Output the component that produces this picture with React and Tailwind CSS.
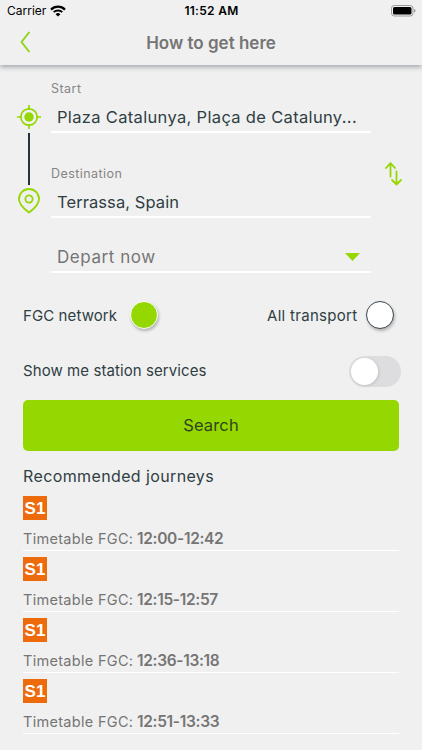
const journeys = ["12:00-12:42", "12:15-12:57", "12:36-13:18", "12:51-13:33"];

const StatusBar = () => (
  <div className="h-[22px] pl-[7px] pr-[6px] grid grid-cols-3 items-center text-black">
    <div className="flex items-center gap-[4px]">
      <span className="text-[12px] leading-4">Carrier</span>
      <svg width="16" height="12" viewBox="0 0 16 12" fill="none">
        <path d="M1 4.6a9.9 9.9 0 0 1 14 0" stroke="#000" strokeWidth="2.2" />
        <path d="M3.7 7.2a6.1 6.1 0 0 1 8.6 0" stroke="#000" strokeWidth="1.9" />
        <path d="M8 11.6 5.6 9.2a3.4 3.4 0 0 1 4.8 0z" fill="#000" />
      </svg>
    </div>
    <span className="text-center text-[12px] leading-4 tracking-[0.3px] font-semibold whitespace-nowrap">11:52 AM</span>
    <svg className="justify-self-end" width="25" height="12" viewBox="0 0 25 12">
      <rect x="0.5" y="0.5" width="21.5" height="10.5" rx="2.8" fill="none" stroke="#9a9a9a" />
      <rect x="2" y="2" width="18.5" height="7.5" rx="1.5" fill="#000" />
      <path d="M23.2 4v3.6c.9-.3 1.3-1 1.3-1.800s-.4-1.500-1.300-1.800z" fill="#8e8e8e" />
    </svg>
  </div>
);

const Header = () => (
  <header className="h-[65px] shrink-0 bg-[#f0f0f0] shadow-[0_2px_5px_rgba(60,70,85,0.45)]">
    <StatusBar />
    <div className="h-[43px] px-5 grid grid-cols-[20px_1fr_20px] items-center">
      <svg className="mb-1" width="11" height="22" viewBox="0 0 11 22" fill="none">
        <path d="M9 1.500 1.500 11 9 20.500" stroke="#8fd31a" strokeWidth="1.900" strokeLinecap="round" />
      </svg>
      <h1 className="text-center text-[17px] font-semibold text-[#757575]">How to get here</h1>
    </div>
  </header>
);

// Start and destination markers joined by a line
const RouteMarkers = () => (
  <div className="w-6 mt-[24.5px] flex flex-col items-center">
    <svg width="24" height="24" viewBox="0 0 24 24" fill="none" stroke="#95d700" strokeWidth="1.7">
      <circle cx="12" cy="12" r="8.200" />
      <circle cx="12" cy="12" r="4.700" fill="#95d700" stroke="none" />
      <path d="M12 0v5M12 19v5M0 12h5M19 12h5" />
    </svg>
    <div className="mt-1 w-[2px] h-[52px] bg-[#263238]" />
    <svg className="mt-[3px]" width="24" height="26" viewBox="0 0 24 26" fill="none" stroke="#95d700" strokeWidth="1.8" strokeLinejoin="round">
      <path d="M12 24.500C8.500 22 2 17 2 11a10 10 0 0 1 20 0c0 6-6.500 11-10 13.500z" />
      <circle cx="12" cy="11" r="3.600" />
    </svg>
  </div>
);

const Field = ({ label, value, valueClass }) => (
  <div className="h-[84.5px]">
    <p className="h-4 pt-px text-[12.5px] leading-4 tracking-[0.45px] text-[#858585]">{label}</p>
    <div className="h-[37px] pt-[9px] pl-[6px] border-b-2 border-white">
      <p className={`text-[16.5px] leading-6 whitespace-nowrap text-[#2f3e43] ${valueClass}`}>{value}</p>
    </div>
  </div>
);

const Journey = ({ time }) => (
  <li className="h-[61px] border-b-[1.5px] border-white pt-[6px]">
    <div className="w-6 h-6 bg-[#ee6b0c] flex items-center justify-center font-['Liberation_Sans',Arial,sans-serif] text-[17px] leading-none font-bold text-white">
      S1
    </div>
    <p className="mt-[9px] flex items-center leading-5 text-[#757575]">
      <span className="w-[114px] text-[14.5px] tracking-[0.3px]">Timetable FGC:</span>
      <span className="text-[15.5px] font-semibold tracking-[-0.32px]">{time}</span>
    </p>
  </li>
);

const App = () => {
  return (
    <div className="w-[422px] h-[750px] overflow-hidden flex flex-col bg-[#f0f0f0] font-['Inter',sans-serif]">
      <Header />

      <main className="pl-[23px] pr-[23px]">
        {/* Route form */}
        <div className="flex pt-[15px] -ml-[6px] -mr-[6px]">
          <RouteMarkers />
          <div className="ml-[10px] w-[320px] shrink-0">
            <Field label="Start" value="Plaza Catalunya, Plaça de Cataluny..." valueClass="tracking-[0.33px]" />
            <Field label="Destination" value="Terrassa, Spain" valueClass="tracking-[0.08px]" />
            <div className="-mt-[6px] h-[30px] pl-[6px] pr-[11px] flex items-center justify-between border-b-2 border-white">
              <span className="pt-px text-[17px] tracking-[0.55px] text-[#757575]">Depart now</span>
              <svg width="15" height="8" viewBox="0 0 15 8">
                <path d="M0 0h15L7.500 8z" fill="#95d700" />
              </svg>
            </div>
          </div>
          <svg className="ml-[13.5px] mt-[82px] shrink-0" width="18" height="24" viewBox="0 0 18 24" fill="none" stroke="#95d700" strokeWidth="1.8" strokeLinecap="round" strokeLinejoin="round">
            <path d="M5.500 14.500V1.200M1 6l4.500-4.800L10 6" />
            <path d="M11.500 9.500v13M7 18l4.500 4.500L16 18" />
          </svg>
        </div>

        {/* Network choice */}
        <div className="mt-[26px] h-[32px] pr-[5px] flex items-center justify-between text-[15px] text-[#2f3e43]">
          <div className="flex items-center">
            <span className="w-[107px] pt-[3px] tracking-[0.1px]">FGC network</span>
            <span className="size-7 rounded-full bg-[#95d700] border border-white shadow-[1px_2px_3px_rgba(0,0,0,0.25)]" />
          </div>
          <div className="flex items-center">
            <span className="w-[99px] pt-[3px] tracking-[0.3px]">All transport</span>
            <span className="size-7 rounded-full bg-white border border-[#37474f] shadow-[1px_2px_3px_rgba(0,0,0,0.25)]" />
          </div>
        </div>

        {/* Station services */}
        <div className="mt-[24px] h-8 -mr-[2px] flex items-center justify-between">
          <span className="text-[15px] tracking-[0.08px] text-[#2f3e43]">Show me station services</span>
          <div className="w-[52px] h-[31px] p-[2px] rounded-full bg-[#dddddf]">
            <div className="size-[27px] rounded-full bg-white shadow-[1px_1px_3px_rgba(0,0,0,0.12)]" />
          </div>
        </div>

        <button className="mt-[13px] w-full h-[51px] rounded-[5px] bg-[#95d700] text-[16.5px] tracking-[0.15px] text-[#30451c]">
          Search
        </button>

        <h2 className="mt-[13px] leading-6 text-[16px] tracking-[0.38px] text-[#2f3e43]">Recommended journeys</h2>
        <ul className="mt-[2px]">
          {journeys.map((time) => (
            <Journey key={time} time={time} />
          ))}
        </ul>
      </main>
    </div>
  );
};

export default App;
